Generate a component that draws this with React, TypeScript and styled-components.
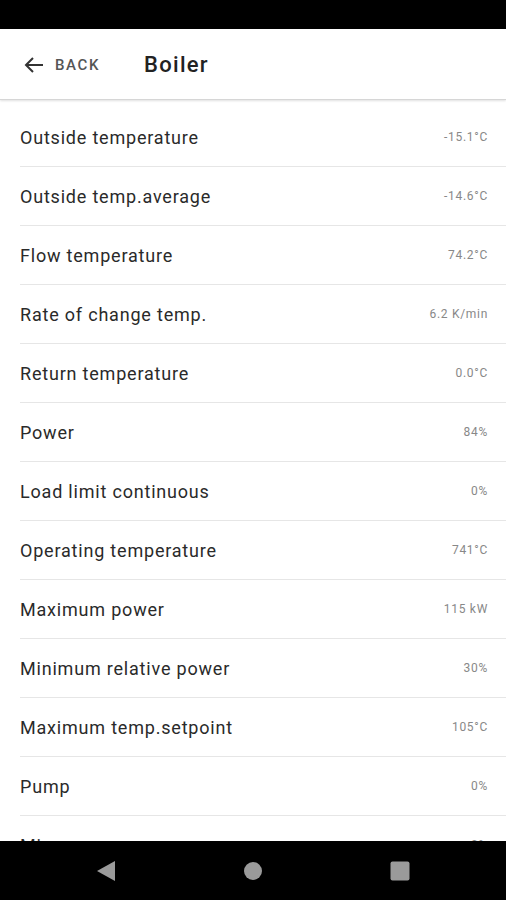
import * as React from 'react';
import styled, { createGlobalStyle } from 'styled-components';

const GlobalStyle = createGlobalStyle`
  html, body {
    margin: 0;
    padding: 0;
    background: #fff;
    font-family: Roboto, 'Noto Sans', sans-serif;
  }
`;

const Screen = styled.div`
  width: 506px;
  height: 900px;
  display: flex;
  flex-direction: column;
  overflow: hidden;
  background: #fff;
`;

const StatusBar = styled.div`
  height: 29px;
  flex: none;
  background: #000;
`;

const Header = styled.div`
  height: 69px;
  flex: none;
  display: flex;
  align-items: center;
  padding-left: 22px;
  padding-top: 1px;
  border-bottom: 1px solid #d6d6d6;
  box-shadow: 0 1px 2px rgba(0, 0, 0, 0.12);
  position: relative;
  z-index: 1;
`;

const BackButton = styled.div`
  display: flex;
  align-items: center;
  gap: 9px;
  width: 122px;
`;

const BackLabel = styled.span`
  font-size: 15px;
  font-weight: 500;
  letter-spacing: 1.6px;
  color: #555;
`;

const Title = styled.h1`
  margin: 0;
  font-size: 22px;
  font-weight: 500;
  letter-spacing: 1.3px;
  color: #222;
`;

const List = styled.div`
  flex: 1;
  overflow: hidden;
  padding-top: 8px;
`;

const Row = styled.div`
  height: 58px;
  display: flex;
  align-items: center;
  justify-content: space-between;
  margin-left: 20px;
  padding-right: 18px;
  border-bottom: 1px solid #e6e6e6;
`;

const Label = styled.span`
  font-size: 18px;
  letter-spacing: 0.8px;
  color: #2a2a2a;
`;

const Value = styled.span`
  font-size: 12px;
  letter-spacing: 0.7px;
  color: #888;
`;

const NavBar = styled.div`
  height: 59px;
  flex: none;
  background: #000;
  display: flex;
  align-items: center;
  justify-content: space-between;
  padding: 0 95px;
`;

const NavIcon = styled.svg`
  width: 22px;
  height: 22px;
  fill: #9a9a9a;
`;

const rows: [string, string][] = [
  ['Outside temperature', '-15.1°C'],
  ['Outside temp.average', '-14.6°C'],
  ['Flow temperature', '74.2°C'],
  ['Rate of change temp.', '6.2 K/min'],
  ['Return temperature', '0.0°C'],
  ['Power', '84%'],
  ['Load limit continuous', '0%'],
  ['Operating temperature', '741°C'],
  ['Maximum power', '115 kW'],
  ['Minimum relative power', '30%'],
  ['Maximum temp.setpoint', '105°C'],
  ['Pump', '0%'],
  ['Mixer', '0%'],
];

export default function App() {
  return (
    <Screen>
      <GlobalStyle />
      <StatusBar />
      <Header>
        <BackButton>
          <svg width="24" height="24" viewBox="0 0 24 24" fill="none" stroke="#333" strokeWidth="2">
            <path d="M21 12H4M11 5l-7 7 7 7" />
          </svg>
          <BackLabel>BACK</BackLabel>
        </BackButton>
        <Title>Boiler</Title>
      </Header>
      <List>
        {rows.map(([label, value]) => (
          <Row key={label}>
            <Label>{label}</Label>
            <Value>{value}</Value>
          </Row>
        ))}
      </List>
      <NavBar>
        <NavIcon viewBox="0 0 22 22">
          <path d="M20 1v20L2 11z" />
        </NavIcon>
        <NavIcon viewBox="0 0 22 22">
          <circle cx="11" cy="11" r="9" />
        </NavIcon>
        <NavIcon viewBox="0 0 22 22">
          <rect x="1.5" y="1.5" width="19" height="19" rx="2" />
        </NavIcon>
      </NavBar>
    </Screen>
  );
}
